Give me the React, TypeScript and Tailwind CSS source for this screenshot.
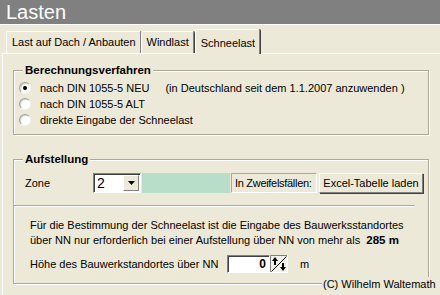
import React from 'react';

const font = { fontFamily: '"Liberation Sans", Arial, sans-serif' };

function Tab({ label, active }: { label: string; active?: boolean }) {
  if (active) {
    return (
      <div className="relative z-10 -mb-px ml-[1px] flex h-[25px] items-start whitespace-nowrap rounded-t-[2px] border-l border-t border-r border-l-white border-t-white border-r-[#808080] bg-[#ece9d8] pl-[5px] pr-[4px] pt-[5px] shadow-[1px_0_0_#404040]">
        {label}
      </div>
    );
  }
  return (
    <div className="flex h-[22px] items-center whitespace-nowrap rounded-t-[2px] border-l border-t border-r border-l-white border-t-white border-r-[#808080] pl-[5px] pr-[4px] shadow-[1px_0_0_#404040]">
      {label}
    </div>
  );
}

function Radio({ checked, children }: { checked?: boolean; children: React.ReactNode }) {
  return (
    <div className="flex h-[16px] items-center whitespace-pre">
      <span className="flex h-[12px] w-[12px] shrink-0 items-center justify-center rounded-full border border-t-[#a0a0a0] border-l-[#a0a0a0] border-b-[#f4f4f4] border-r-[#f4f4f4] bg-white shadow-[inset_1px_1px_0_#d6d3c6]">
        {checked && <span className="h-[4px] w-[4px] rounded-full bg-black" />}
      </span>
      <span className="ml-[9px]">{children}</span>
    </div>
  );
}

function SpinIcon() {
  return (
    <svg width="18" height="18" viewBox="0 0 18 18" className="block shrink-0">
      <rect x="0" y="0" width="18" height="18" fill="#f2f1ec" />
      <path d="M0.5 18 V0.5 H18" fill="none" stroke="#808080" />
      <path d="M17.5 0 V17.5 H0" fill="none" stroke="#ffffff" />
      <path d="M1.5 16.5 L16.5 1.5" stroke="#000" strokeWidth="1" />
      <path d="M5 2 L2 6 H4 V10 H6 V6 H8 Z" fill="#000" />
      <path d="M13 16 L10 12 H12 V8 H14 V12 H16 Z" fill="#000" />
    </svg>
  );
}

export default function App() {
  return (
    <div className="h-[295px] w-[440px] overflow-hidden bg-[#ece9d8] text-[11px] text-black" style={font}>
      {/* Titelleiste */}
      <div className="h-[25px] border-b border-white bg-[#808080] pl-[6px] text-[20px] leading-[24px] text-white">
        Lasten
      </div>

      {/* Registerkarten */}
      <div className="flex h-[28px] items-end pl-[6px]">
        <Tab label="Last auf Dach / Anbauten" />
        <Tab label="Windlast" />
        <Tab label="Schneelast" active />
      </div>

      <div className="ml-[2px] h-[250px] border-l border-t border-white">
        <fieldset className="ml-[10px] mt-[9px] w-[416px] border border-[#aca899] pb-[6px] pl-[5px] shadow-[inset_1px_1px_0_#fff,1px_1px_0_#fff]">
          <legend className="ml-[4px] bg-[#ece9d8] px-[2px] text-[11.5px] font-bold leading-[14px]">
            Berechnungsverfahren
          </legend>
          <div className="mt-[3px]">
            <Radio checked>
              nach DIN 1055-5 NEU<span className="ml-[16px]">(in Deutschland seit dem 1.1.2007 anzuwenden )</span>
            </Radio>
            <Radio>nach DIN 1055-5 ALT</Radio>
            <Radio>direkte Eingabe der Schneelast</Radio>
          </div>
        </fieldset>

        <fieldset className="relative ml-[10px] mt-[17px] w-[416px] border border-[#aca899] pb-[10px] pl-[5px] shadow-[inset_1px_1px_0_#fff,1px_1px_0_#fff]">
          <legend className="ml-[4px] bg-[#ece9d8] px-[2px] text-[11.5px] font-bold leading-[14px]">
            Aufstellung
          </legend>

          <div className="mt-[7px] flex h-[20px] items-stretch whitespace-nowrap">
            <span className="ml-[6px] flex w-[68px] shrink-0 items-center">Zone</span>
            <div className="flex w-[48px] shrink-0 border border-t-[#808080] border-l-[#808080] border-b-white border-r-white bg-white shadow-[inset_1px_1px_0_#404040]">
              <span className="flex-1 pl-[3px] pt-[1px] text-[14px] leading-[16px]">2</span>
              <span className="m-[1px] flex w-[16px] items-center justify-center border border-t-white border-l-white border-b-[#808080] border-r-[#808080] bg-[#ece9d8]">
                <svg width="7" height="4" viewBox="0 0 7 4">
                  <path d="M0 0 H7 L3.5 4 Z" fill="#000" />
                </svg>
              </span>
            </div>
            <div className="ml-[1px] w-[88px] shrink-0 bg-[#b8dec9]" />
            <div className="ml-[1px] flex w-[86px] shrink-0 items-center border border-t-[#aca899] border-l-[#aca899] border-b-white border-r-white pl-[3px] tracking-[-0.3px]">
              In Zweifelsfällen:
            </div>
            <button className="ml-[2px] flex w-[104px] shrink-0 items-center justify-center border border-t-white border-l-white border-b-[#808080] border-r-[#808080] bg-[#ece9d8] shadow-[1px_1px_0_#404040]">
              Excel-Tabelle laden
            </button>
          </div>

          <div className="-ml-[5px] mt-[12px] w-[401px] border-t border-b border-t-[#aca899] border-b-white" />

          <div className="mt-[11px] pl-[11px] leading-[15px]">
            <div>Für die Bestimmung der Schneelast ist die Eingabe des Bauwerksstandortes</div>
            <div className="whitespace-pre">
              über NN nur erforderlich bei einer Aufstellung über NN von mehr als  <b className="text-[11.5px]">285 m</b>
            </div>
          </div>

          <div className="mt-[7px] flex h-[18px] items-center whitespace-nowrap pl-[11px]">
            <span className="w-[197px] shrink-0">Höhe des Bauwerkstandortes über NN</span>
            <div className="flex h-[18px] w-[43px] shrink-0 items-center justify-end border border-t-[#808080] border-l-[#808080] border-b-white border-r-white bg-white pr-[3px] text-[12px] font-bold shadow-[inset_1px_1px_0_#404040]">
              0
            </div>
            <SpinIcon />
            <span className="ml-[12px]">m</span>
          </div>

          <span className="absolute bottom-[-8px] left-[308px] whitespace-nowrap bg-[#ece9d8] px-[1px] leading-[14px]">
            (C) Wilhelm Waltemath
          </span>
        </fieldset>
      </div>
    </div>
  );
}
